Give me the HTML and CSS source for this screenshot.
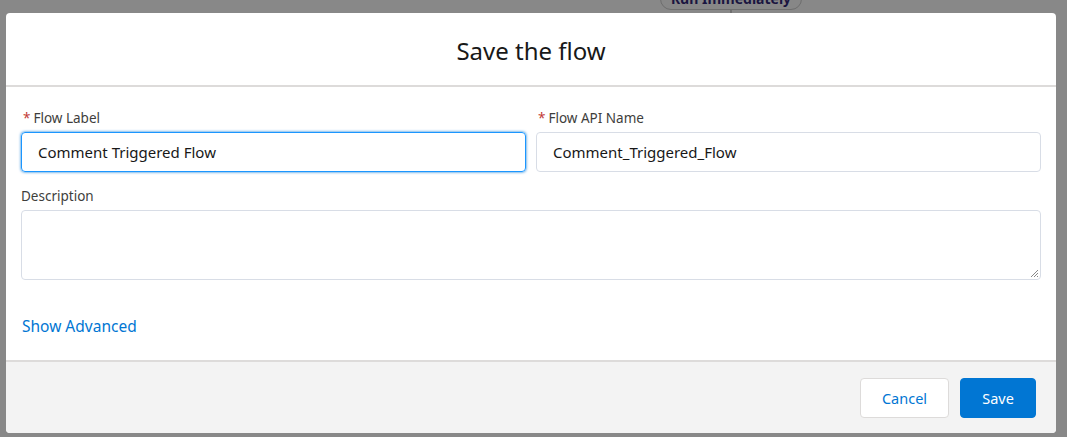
FILE: index.html
```html
<!DOCTYPE html>
<html>
<head>
<meta charset="utf-8">
<link rel="stylesheet" href="styles.css">
</head>
<body>
<div class="backdrop">
  <div class="bg-pill">Run Immediately</div>
  <div class="bg-line"></div>
  <div class="modal">
    <header class="modal-header">
      <h2 class="title">Save the flow</h2>
    </header>
    <div class="modal-body">
      <div class="row">
        <div class="field">
          <label class="label"><span class="req">*</span>Flow Label</label>
          <div class="input focused">Comment Triggered Flow</div>
        </div>
        <div class="field">
          <label class="label"><span class="req">*</span>Flow API Name</label>
          <div class="input">Comment_Triggered_Flow</div>
        </div>
      </div>
      <div class="field desc">
        <label class="label plain">Description</label>
        <div class="textarea">
          <svg class="grip" width="10" height="10" viewBox="0 0 10 10"><path d="M9 2L2 9M9 5L5 9M9 8L8 9" stroke="#888" stroke-width="1" fill="none"/></svg>
        </div>
      </div>
      <a class="link">Show Advanced</a>
    </div>
    <footer class="modal-footer">
      <button class="btn neutral">Cancel</button>
      <button class="btn brand">Save</button>
    </footer>
  </div>
</div>
</body>
</html>
```
FILE: styles.css
```css
html, body { margin: 0; padding: 0; }
body {
  background: #888888;
  font-family: "Noto Sans", "Open Sans", sans-serif;
  color: #181818;
  width: 1067px;
  height: 437px;
  overflow: hidden;
}
.backdrop {
  position: relative;
  padding: 13px 11px 0 6px;
}
.bg-pill {
  position: absolute;
  left: 660px;
  top: -12px;
  width: 140px;
  height: 20px;
  border: 1px solid #6e6e6e;
  border-radius: 12px;
  background: #878787;
  color: #1a1540;
  font-weight: 700;
  font-size: 14px;
  line-height: 20px;
  text-align: center;
}
.bg-line {
  position: absolute;
  left: 730px;
  top: 9px;
  width: 2px;
  height: 4px;
  background: #6e6e6e;
}
.modal {
  position: relative;
  width: 1050px;
  height: 420px;
  background: #fff;
  border-radius: 4px;
  overflow: hidden;
  display: flex;
  flex-direction: column;
}
.modal-header {
  height: 72px;
  border-bottom: 2px solid #dddbda;
  display: flex;
  align-items: center;
  justify-content: center;
}
.title {
  margin: 0;
  font-weight: 400;
  font-size: 24px;
  color: #181818;
  padding-top: 2px;
}
.modal-body {
  flex: 1;
  padding: 22px 15px 0 15px;
}
.row {
  display: flex;
  gap: 10px;
}
.field { flex: 1; }
.label {
  display: block;
  font-size: 13.5px;
  line-height: 18px;
  color: #3e3e3c;
  margin-bottom: 5px;
  padding-left: 2px;
}
.label.plain { padding-left: 0; }
.req {
  color: #c23934;
  margin-right: 3px;
}
.input {
  box-sizing: border-box;
  height: 40px;
  border: 1px solid #d8dde6;
  border-radius: 4px;
  padding: 0 16px;
  font-size: 15px;
  line-height: 38px;
  color: #181818;
}
.input.focused {
  border-color: #1b96ff;
  box-shadow: 0 0 3px #0176d3;
}
.desc { margin-top: 15px; }
.textarea {
  position: relative;
  box-sizing: border-box;
  height: 70px;
  border: 1px solid #d8dde6;
  border-radius: 4px;
}
.grip {
  position: absolute;
  right: 1px;
  bottom: 1px;
}
.link {
  display: block;
  margin-top: 36px;
  padding-left: 1px;
  font-size: 15.5px;
  line-height: 20px;
  color: #0176d3;
}
.modal-footer {
  height: 71px;
  border-top: 2px solid #dddbda;
  background: #f3f3f3;
  display: flex;
  align-items: center;
  justify-content: flex-end;
  gap: 11px;
  padding: 0 20px;
}
.btn {
  height: 40px;
  border-radius: 4px;
  font-family: inherit;
  font-size: 14.5px;
  padding: 0 20px;
}
.neutral {
  width: 89px;
  background: #fff;
  border: 1px solid #dddbda;
  color: #0176d3;
}
.brand {
  width: 76px;
  background: #0176d3;
  border: 1px solid #0176d3;
  color: #fff;
}
```
